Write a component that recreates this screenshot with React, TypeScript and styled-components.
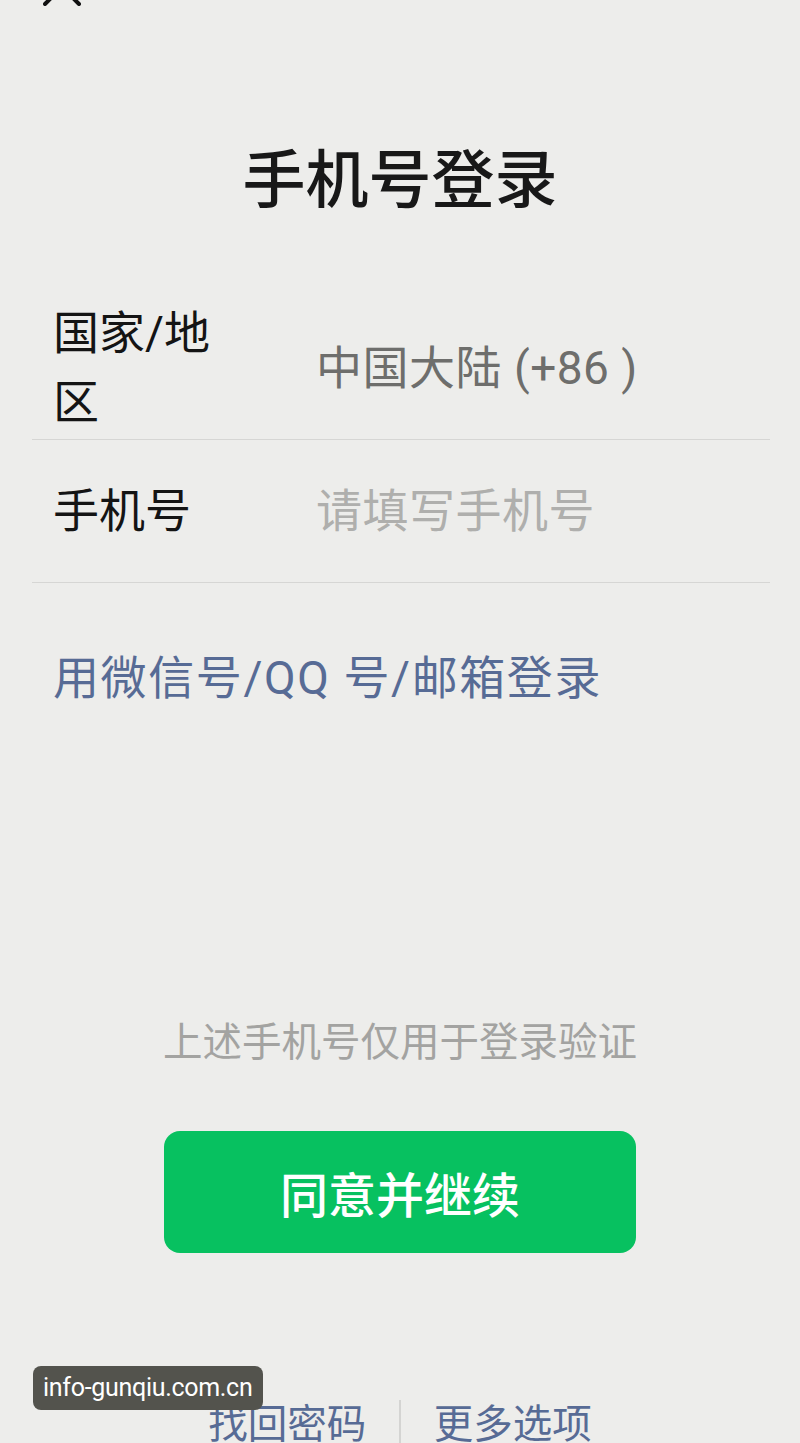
import React from 'react';
import styled, {createGlobalStyle} from 'styled-components';

const GlobalStyle = createGlobalStyle`
  html, body {
    margin: 0;
    padding: 0;
    background: #ededeb;
  }
  body {
    font-family: Roboto, "Noto Sans CJK SC", sans-serif;
  }
`;

const Page = styled.div`
  position: relative;
  width: 800px;
  height: 1443px;
  overflow: hidden;
  background: #ededeb;
  display: flex;
  flex-direction: column;

  & > * {
    flex-shrink: 0;
  }
`;

const TopBar = styled.div`
  height: 6px;
  display: flex;
  align-items: flex-end;
  padding-left: 43px;
  overflow: hidden;
`;

const CloseIcon = styled.svg`
  flex: none;
  width: 38px;
  height: 38px;
`;

const Title = styled.h1`
  margin: 125px 0 0;
  text-align: center;
  font-family: "Noto Sans CJK SC", sans-serif;
  font-size: 63px;
  line-height: 87px;
  font-weight: 500;
  color: #181818;
`;

const Form = styled.div`
  margin: 79px 30px 0 32px;
  display: flex;
  flex-direction: column;
`;

const Row = styled.div`
  min-height: 142px;
  display: flex;
  align-items: center;
  padding-left: 21px;
  border-bottom: 1.5px solid #d6d6d4;
`;

const Label = styled.div`
  width: 190px;
  flex: none;
  font-size: 46px;
  line-height: 69px;
  color: #141414;
`;

const Value = styled.div<{ $placeholder?: boolean }>`
  margin-left: 73px;
  font-size: 46px;
  line-height: 64px;
  letter-spacing: 0.5px;
  color: ${p => (p.$placeholder ? '#afafad' : '#6e6e6c')};
`;

const AltLogin = styled.div`
  margin: 63px 0 0 53px;
  font-size: 46px;
  line-height: 64px;
  letter-spacing: 1.6px;
  color: #576b95;
`;

const Hint = styled.div`
  margin-top: 305px;
  text-align: center;
  font-size: 39.5px;
  line-height: 56px;
  color: #a3a3a1;
`;

const PrimaryButton = styled.button`
  align-self: center;
  margin-top: 60px;
  width: 472px;
  height: 122px;
  border: none;
  border-radius: 16px;
  background: #07c160;
  color: #ffffff;
  font-family: "Noto Sans CJK SC", sans-serif;
  font-size: 48px;
  font-weight: 500;
`;

const Footer = styled.div`
  margin-top: 144px;
  display: flex;
  justify-content: center;
  align-items: flex-start;
`;

const FooterLink = styled.div`
  padding: 0 33px;
  font-size: 39.5px;
  line-height: 56px;
  color: #576b95;
`;

const FooterDivider = styled.div`
  width: 1.5px;
  height: 60px;
  margin-top: 3px;
  background: #d4d4d2;
`;

const Watermark = styled.div`
  position: absolute;
  left: 33px;
  top: 1366px;
  width: 230px;
  height: 44px;
  border-radius: 8px;
  background: #53534d;
  color: #ffffff;
  font-family: Roboto, "Liberation Sans", sans-serif;
  font-size: 25px;
  letter-spacing: -0.3px;
  line-height: 44px;
  padding-left: 10px;
  box-sizing: border-box;
`;

export default function App() {
  return (
    <Page>
      <GlobalStyle/>
      <TopBar>
        <CloseIcon viewBox="0 0 38 38">
          <path d="M2 2 L36 36 M36 2 L2 36" stroke="#111" strokeWidth="4" strokeLinecap="round" fill="none"/>
        </CloseIcon>
      </TopBar>
      <Title>手机号登录</Title>
      <Form>
        <Row>
          <Label>国家/地区</Label>
          <Value>中国大陆 (+86 )</Value>
        </Row>
        <Row>
          <Label>手机号</Label>
          <Value $placeholder>请填写手机号</Value>
        </Row>
      </Form>
      <AltLogin>用微信号/QQ 号/邮箱登录</AltLogin>
      <Hint>上述手机号仅用于登录验证</Hint>
      <PrimaryButton>同意并继续</PrimaryButton>
      <Footer>
        <FooterLink>找回密码</FooterLink>
        <FooterDivider/>
        <FooterLink>更多选项</FooterLink>
      </Footer>
      <Watermark>info-gunqiu.com.cn</Watermark>
    </Page>
  );
}
